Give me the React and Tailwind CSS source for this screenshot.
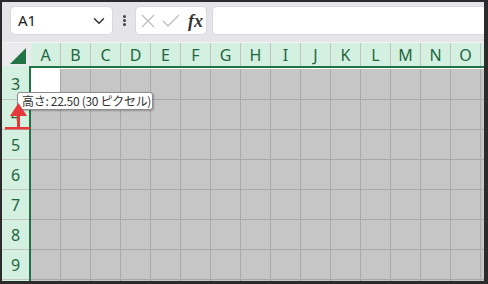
import React from "react";
import { ChevronDown } from "lucide-react";

const cols = ["A", "B", "C", "D", "E", "F", "G", "H", "I", "J", "K", "L", "M", "N", "O", ""];
const rows = [4, 5, 6, 7, 8, 9, ""];

const App = () => {
  return (
    <div className="relative w-[488px] h-[284px] bg-[#2b2b2b] pt-[2px] pl-[2px] pr-[4px] pb-[3px] font-['Noto_Sans','Noto_Sans_CJK_JP',sans-serif] overflow-hidden">
      <div className="w-full h-full flex flex-col overflow-hidden bg-[#e4e4e9]">
        {/* toolbar */}
        <div className="h-[40px] shrink-0 flex items-start pt-[4px] pl-[8px]">
          <div className="w-[103px] h-[29px] bg-white rounded-[5px] border border-[#d9d9de] flex items-center justify-between pl-[7px] pr-[4px]">
            <span className="text-[15px] text-[#222] leading-none">A1</span>
            <ChevronDown size={18} strokeWidth={2} className="text-[#333]" />
          </div>
          <div className="w-[22px] h-[29px] flex flex-col items-center justify-center gap-[1px]">
            <div className="w-[3px] h-[3px] rounded-full bg-[#444]"></div>
            <div className="w-[3px] h-[3px] rounded-full bg-[#444]"></div>
            <div className="w-[3px] h-[3px] rounded-full bg-[#444]"></div>
          </div>
          <div className="w-[72px] h-[29px] bg-white rounded-[5px] border border-[#d9d9de] flex items-center pl-[5px]">
            <svg width="14" height="14" viewBox="0 0 14 14" className="shrink-0">
              <path d="M1 1 L13 13 M13 1 L1 13" stroke="#bdbdbd" strokeWidth="1.3" fill="none" />
            </svg>
            <svg width="18" height="14" viewBox="0 0 18 14" className="ml-[7px] shrink-0">
              <path d="M1 7 L6 12 L17 1" stroke="#bdbdbd" strokeWidth="1.3" fill="none" />
            </svg>
            <span className="ml-[8px] font-['Liberation_Serif',serif] italic font-bold text-[18px] text-[#333] leading-none">fx</span>
          </div>
          <div className="ml-[5px] flex-1 h-[29px] bg-white rounded-l-[5px] border border-r-0 border-[#d9d9de]"></div>
        </div>

        {/* column headers */}
        <div className="h-[24px] shrink-0 flex border-t border-[#f4f4f6]">
          <div className="w-[29px] shrink-0 bg-[#ebebee] relative">
            <div className="absolute left-[8px] top-[5px] w-[16px] h-[16px] bg-[#217346] [clip-path:polygon(100%_0,100%_100%,0_100%)]"></div>
          </div>
          {cols.map((c, i) => (
            <div
              key={i}
              className="w-[30px] shrink-0 bg-[#d3f0e0] border-r border-[#c3c3c3] flex items-center justify-center text-[16px] text-[#1f6640]"
            >
              {c}
            </div>
          ))}
        </div>

        {/* body */}
        <div className="flex flex-1 overflow-hidden">
          <div className="w-[27px] shrink-0 flex flex-col bg-[#d3f0e0]">
            <div className="h-[34px] shrink-0 border-b border-[#c3c3c3] flex items-center justify-center pt-[3px] text-[16px] text-[#1f6640]">
              3
            </div>
            {rows.map((r, i) => (
              <div
                key={i}
                className="h-[30px] shrink-0 border-b border-[#c3c3c3] flex items-center justify-center text-[16px] text-[#1f6640]"
              >
                {r}
              </div>
            ))}
          </div>
          <div className="w-[2px] shrink-0 bg-[#217346]"></div>
          <div className="flex-1 flex flex-col">
            <div className="h-[2px] shrink-0 bg-[#217346]"></div>
            <div className="h-[1px] shrink-0 bg-white"></div>
            <div className="h-[31px] shrink-0 flex">
              {cols.map((c, i) => (
                <div
                  key={i}
                  className={`w-[30px] shrink-0 border-r border-b border-[#a9a9a9] ${i === 0 ? "bg-white border-b-[#c6c6c6]" : "bg-[#c6c6c6]"}`}
                ></div>
              ))}
            </div>
            {rows.map((r, ri) => (
              <div key={ri} className="h-[30px] shrink-0 flex">
                {cols.map((c, i) => (
                  <div key={i} className="w-[30px] shrink-0 bg-[#c6c6c6] border-r border-b border-[#a9a9a9]"></div>
                ))}
              </div>
            ))}
          </div>
        </div>
      </div>

      {/* row height tooltip */}
      <div className="absolute left-[17px] top-[92px] w-[136px] h-[18px] bg-white border border-[#8c8c8c] rounded-[3px] shadow-[1px_1px_2px_rgba(0,0,0,0.25)] flex items-center pl-[4px] text-[12px] tracking-[-0.3px] leading-none text-[#333] whitespace-nowrap font-['Noto_Sans_CJK_JP',sans-serif]">
        高さ: 22.50 (30 ピクセル)
      </div>

      {/* resize arrow */}
      <svg className="absolute left-0 top-0" width="40" height="140" viewBox="0 0 40 140">
        <polygon points="18.5,103 10,116 27,116" fill="#e5383b" />
        <rect x="17" y="115" width="3" height="13" fill="#e5383b" />
        <rect x="5" y="127" width="25" height="2.5" fill="#e5383b" />
      </svg>
    </div>
  );
};

export default App;
